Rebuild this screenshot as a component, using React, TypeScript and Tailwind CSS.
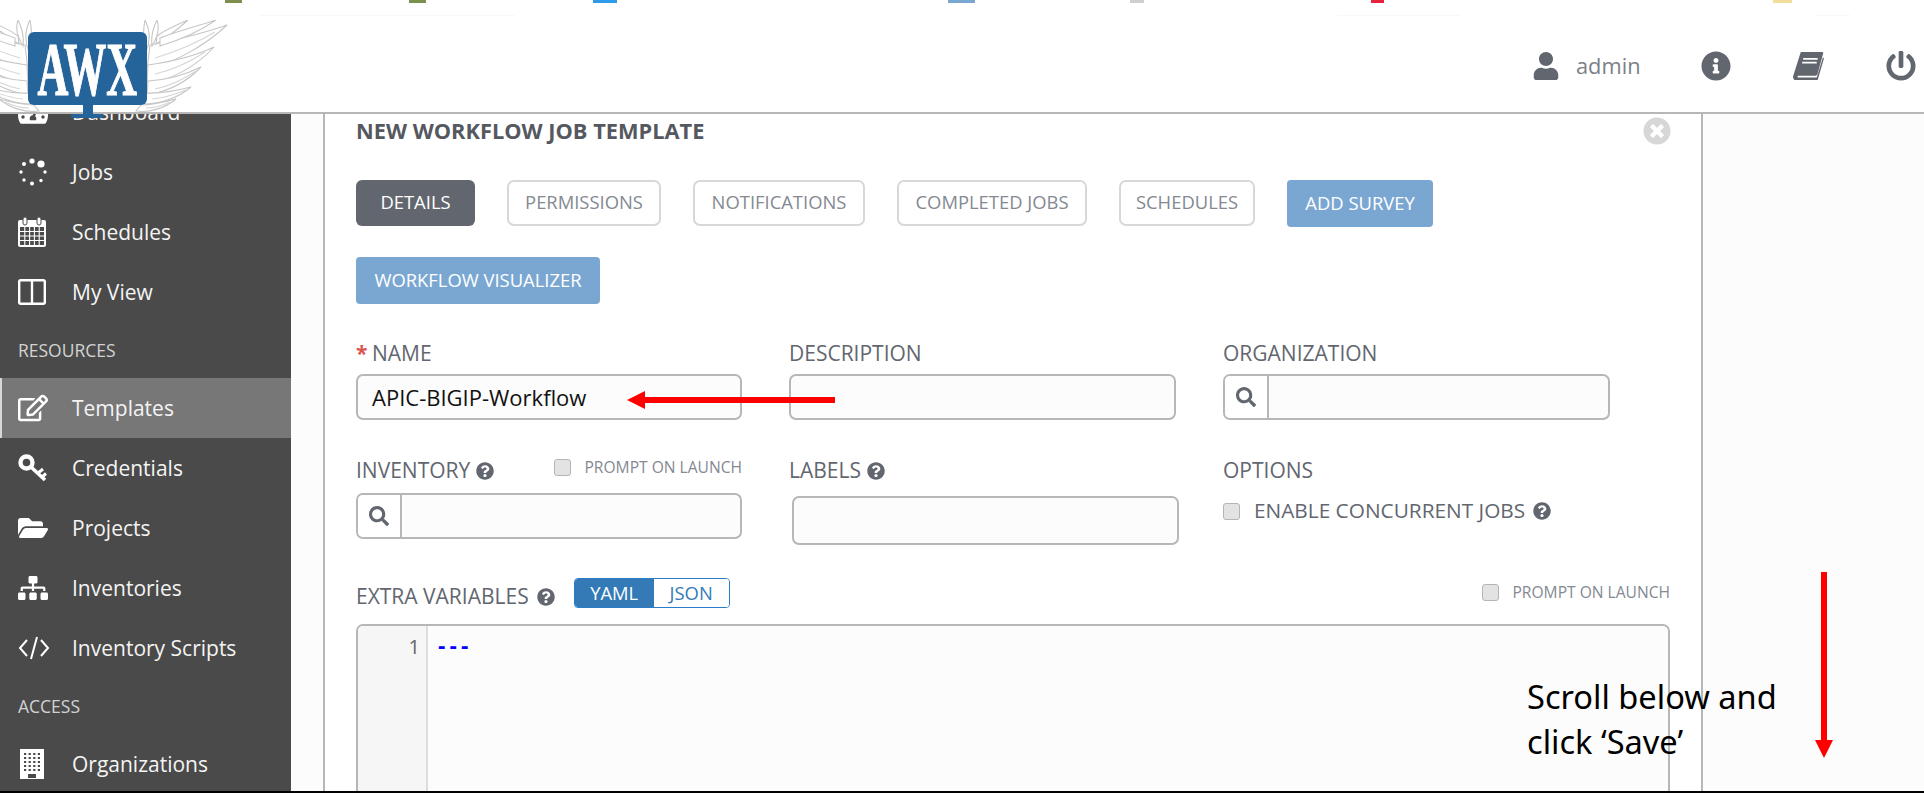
import {
  FaFolderOpen,
  FaInfoCircle,
  FaPowerOff,
  FaQuestionCircle,
  FaRegEdit,
  FaSearch,
  FaSitemap,
  FaTachometerAlt,
  FaTimesCircle,
  FaUser,
} from 'react-icons/fa'
import type { ReactNode } from 'react'

// bits of the page above that stick out at the top of the screenshot
const slivers = [
  'left-[225px] w-[17px] top-0 h-[3px] bg-[#7c8f4c]',
  'left-[409px] w-[17px] top-0 h-[3px] bg-[#7c8f4c]',
  'left-[593px] w-[24px] top-0 h-[3px] bg-[#2f9be8]',
  'left-[948px] w-[27px] top-0 h-[3px] bg-[#7aa7d2]',
  'left-[1130px] w-[14px] top-0 h-[3px] bg-[#cfcfcf]',
  'left-[1371px] w-[13px] top-0 h-[3px] bg-[#e8213f]',
  'left-[1773px] w-[19px] top-0 h-[3px] bg-[#f3dd9a]',
  'left-[260px] w-[255px] top-[15px] h-[1px] bg-[#f8f8f8]',
  'left-[1337px] w-[123px] top-[15px] h-[1px] bg-[#f8f8f8]',
  'left-[1816px] w-[34px] top-[15px] h-[1px] bg-[#f8f8f8]',
]

const feathers = [
  'M147 70C175 62 205 46 227 25C210 31 180 39 150 45Z',
  'M147 84C170 80 195 68 214 47C195 56 170 62 148 65Z',
  'M147 95C165 92 185 84 201 67C185 75 165 80 148 81Z',
  'M145 104C160 104 178 98 191 87C175 91 160 94 146 93Z',
  'M136 111C150 113 165 108 176 99C165 102 150 105 141 105Z',
  'M146 52C151 40 150 30 145 20C143 30 143 42 146 52Z',
  'M152 46C158 36 160 28 157 20C153 28 151 38 152 46Z',
  'M156 44C168 37 178 29 188 20C176 25 165 30 157 36Z',
  'M160 46C180 40 200 31 216 20C198 26 178 31 160 38Z',
]

const barbs = [
  'M155 58C175 52 195 44 215 32',
  'M155 74C172 70 190 62 205 52',
  'M155 89C170 86 184 79 196 71',
  'M152 99C164 98 176 94 186 90',
  'M146 108C154 108 162 106 170 102',
]

function JobsIcon() {
  return (
    <svg viewBox="0 0 30 30" className="w-[30px] h-[30px]" fill="#fff">
      <circle cx="23" cy="7" r="3.6" />
      <circle cx="14" cy="4" r="2.6" />
      <circle cx="6" cy="7" r="2" />
      <circle cx="3" cy="15" r="1.7" />
      <circle cx="6" cy="23" r="1.7" />
      <circle cx="14" cy="26.5" r="2" />
      <circle cx="23" cy="23.5" r="1.7" />
      <circle cx="27" cy="15" r="1.7" />
    </svg>
  )
}

function CalendarIcon() {
  return (
    <svg viewBox="0 0 28 30" className="w-[28px] h-[30px]">
      <rect x="0" y="3" width="28" height="27" rx="2" fill="#fff" />
      <rect x="2" y="10" width="24" height="18" fill="#4a4a4a" />
      <path d="M2 14.5h24M2 19h24M2 23.5h24M6.8 10v18M11.6 10v18M16.4 10v18M21.2 10v18" stroke="#fff" strokeWidth="1.1" />
      <rect x="5" y="0" width="4" height="8" rx="2" fill="#fff" stroke="#4a4a4a" />
      <rect x="19" y="0" width="4" height="8" rx="2" fill="#fff" stroke="#4a4a4a" />
    </svg>
  )
}

function ColumnsIcon() {
  return (
    <svg viewBox="0 0 28 26" className="w-[28px] h-[26px]" fill="none" stroke="#fff" strokeWidth="2.4">
      <rect x="1.2" y="1.2" width="25.6" height="23.6" rx="1.5" />
      <path d="M14 1v24" />
    </svg>
  )
}

function KeyIcon() {
  return (
    <svg viewBox="0 0 30 28" className="w-[30px] h-[28px]" fill="none" stroke="#fff">
      <circle cx="8.5" cy="8.5" r="6" strokeWidth="4.4" />
      <path d="M13 13L27 26" strokeWidth="3.6" />
      <path d="M20 19l5-4M24 23l4-3.5" strokeWidth="3" />
    </svg>
  )
}

function CodeIcon() {
  return (
    <svg viewBox="0 0 32 24" className="w-[32px] h-[24px]" fill="none" stroke="#fff" strokeWidth="2">
      <path d="M9 4L2 12l7 8M23 4l7 8-7 8M19 1l-6 22" />
    </svg>
  )
}

function BuildingIcon() {
  const cells = []
  for (let row = 0; row < 5; row++) {
    for (let col = 0; col < 4; col++) {
      cells.push(<rect key={`${row}-${col}`} x={4 + col * 4.6} y={4 + row * 4} width="2.2" height="2" fill="#4a4a4a" />)
    }
  }
  return (
    <svg viewBox="0 0 24 30" className="w-[24px] h-[30px] ml-[2px]">
      <rect width="24" height="30" fill="#fff" />
      {cells}
      <rect x="8" y="25" width="8" height="4" fill="#4a4a4a" />
    </svg>
  )
}

function BookIcon() {
  return (
    <svg viewBox="0 0 32 29" className="w-[31px] h-[28px]" fill="#62666f">
      <path d="M8 0h22a1.2 1.2 0 0 1 1.2 1.5l-6 21.5a2 2 0 0 1-2 1.5H5a2 2 0 0 0 0 2h19.5l6.5-21 1 1.2-6.5 22.2a1.5 1.5 0 0 1-1.5 1H4a4 4 0 0 1-4-4.5z" />
      <path d="M10.5 7h15M9.5 11h15" stroke="#fff" strokeWidth="1.8" />
    </svg>
  )
}

function NavRow({ icon, label, active }: { icon: ReactNode; label: string; active?: boolean }) {
  return (
    <div
      className={
        active
          ? 'h-[60px] flex items-center pl-[16px] bg-[#777777] border-l-2 border-[#d8d8d8]'
          : 'h-[60px] flex items-center pl-[18px]'
      }
    >
      <span className="w-[54px] flex items-center text-white text-[30px]">{icon}</span>
      <span className="mt-[2px] text-[21px] text-[#f4f4f4]">{label}</span>
    </div>
  )
}

function SectionLabel({ children }: { children: string }) {
  return <div className="h-[56px] flex items-center pl-[18px] text-[17.5px] text-[#d2d2d2]">{children}</div>
}

function Tab({ children, width, active }: { children: string; width: string; active?: boolean }) {
  return (
    <div
      className={
        active
          ? `h-[46px] ${width} pb-[2px] flex items-center justify-center rounded-[6px] bg-[#62666f] text-white text-[18.4px]`
          : `h-[46px] ${width} pb-[2px] flex items-center justify-center rounded-[7px] border-2 border-[#d8d8d8] text-[#848992] text-[18.4px]`
      }
    >
      {children}
    </div>
  )
}

function BlueButton({ children, width }: { children: string; width: string }) {
  return (
    <div className={`h-[47px] ${width} pb-[2px] flex items-center justify-center rounded-[4px] bg-[#7aa7d2] text-white text-[18.4px]`}>
      {children}
    </div>
  )
}

function Help() {
  return <FaQuestionCircle className="text-[#62666f] text-[18px] shrink-0" />
}

function Check() {
  return <span className="w-[17px] h-[17px] rounded-[3px] bg-[#e3e3e3] border border-[#b5b5b5] shrink-0" />
}

function SearchInput() {
  return (
    <div className="h-[46px] flex rounded-[7px] border-2 border-[#b7b7b7] bg-[#fcfcfc] overflow-hidden">
      <span className="w-[44px] bg-white border-r-2 border-[#b7b7b7] flex items-center justify-center">
        <FaSearch className="text-[#62666f] text-[20px]" />
      </span>
    </div>
  )
}

function Logo() {
  return (
    <div className="absolute left-0 top-[20px] w-[228px] h-[100px] z-20">
      <svg viewBox="0 20 228 93" className="absolute left-0 top-0 w-[228px] h-[93px]" fill="#fff" stroke="#c6c6c6" strokeWidth="1.1">
        <g>
          {feathers.map((d) => (
            <path key={d} d={d} />
          ))}
          {barbs.map((d) => (
            <path key={d} d={d} fill="none" stroke="#d6d6d6" />
          ))}
        </g>
        <g transform="translate(175 0) scale(-1 1)">
          {feathers.map((d) => (
            <path key={d} d={d} />
          ))}
          {barbs.map((d) => (
            <path key={d} d={d} fill="none" stroke="#d6d6d6" />
          ))}
        </g>
      </svg>
      <div className="absolute left-[28px] top-[12px] w-[119px] h-[73px] rounded-[6px] bg-[#25639b] flex items-center justify-center">
        <span className="font-['Liberation_Serif',serif] font-bold text-white text-[62px] leading-[48px] [-webkit-text-stroke:1px_white] [transform:scale(0.69,1.22)]">
          AWX
        </span>
      </div>
      <div className="absolute left-[83px] top-[85px] w-[10px] h-[9px] bg-[#25639b]" />
      <div className="absolute left-[71px] top-[94px] w-[32px] h-[4px] rounded-[2px] bg-[#25639b]" />
    </div>
  )
}

function Arrow({ vertical }: { vertical?: boolean }) {
  if (vertical) {
    return (
      <svg viewBox="0 0 18 186" className="absolute left-[1815px] top-[572px] w-[18px] h-[186px] z-30" fill="#ff0000">
        <rect x="6" y="0" width="6" height="169" />
        <polygon points="0,168 18,168 9,186" />
      </svg>
    )
  }
  return (
    <svg viewBox="0 0 208 18" className="absolute left-[627px] top-[391px] w-[208px] h-[18px] z-30" fill="#ff0000">
      <rect x="17" y="6" width="191" height="6" />
      <polygon points="18,0 18,18 0,9" />
    </svg>
  )
}

export default function App() {
  return (
    <div className="relative h-[793px] w-[1924px] overflow-hidden flex flex-col bg-white font-['Open_Sans',sans-serif]">
      <header className="relative h-[114px] shrink-0 border-b-2 border-[#b7b7b7] bg-white flex items-center justify-end pr-[8px]">
        {slivers.map((s) => (
          <span key={s} className={`absolute ${s}`} />
        ))}
        <div className="flex items-center mt-[20px] text-[#62666f]">
          <FaUser className="text-[28px] mr-[16px]" />
          <span className="text-[21.8px] text-[#7c8088] w-[125px]">admin</span>
          <FaInfoCircle className="text-[30px] mr-[62px]" />
          <BookIcon />
          <FaPowerOff className="text-[30px] ml-[62px]" />
        </div>
      </header>
      <Logo />

      <div className="flex-1 min-h-0 flex">
        <nav className="w-[291px] shrink-0 bg-[#4a4a4a] overflow-hidden">
          <div className="-mt-[32px]">
            <NavRow icon={<FaTachometerAlt />} label="Dashboard" />
            <NavRow icon={<JobsIcon />} label="Jobs" />
            <NavRow icon={<CalendarIcon />} label="Schedules" />
            <NavRow icon={<ColumnsIcon />} label="My View" />
            <SectionLabel>RESOURCES</SectionLabel>
            <NavRow icon={<FaRegEdit />} label="Templates" active />
            <NavRow icon={<KeyIcon />} label="Credentials" />
            <NavRow icon={<FaFolderOpen />} label="Projects" />
            <NavRow icon={<FaSitemap />} label="Inventories" />
            <NavRow icon={<CodeIcon />} label="Inventory Scripts" />
            <SectionLabel>ACCESS</SectionLabel>
            <NavRow icon={<BuildingIcon />} label="Organizations" />
          </div>
        </nav>

        <main className="flex-1 bg-[#fcfcfc] pl-[32px] overflow-hidden">
          <section className="relative w-[1380px] h-full bg-white border-x-2 border-[#b7b7b7] pl-[31px] pr-[31px] overflow-hidden">
            <div className="flex items-center justify-between h-[34px]">
              <h1 className="text-[21.8px] font-bold text-[#55585f] whitespace-nowrap">NEW WORKFLOW JOB TEMPLATE</h1>
              <FaTimesCircle className="text-[#d7d7d7] text-[28px] -mr-[1px]" />
            </div>

            <div className="flex gap-[32px] mt-[32px]">
              <Tab active width="w-[119px]">DETAILS</Tab>
              <Tab width="w-[154px]">PERMISSIONS</Tab>
              <Tab width="w-[172px]">NOTIFICATIONS</Tab>
              <Tab width="w-[190px]">COMPLETED JOBS</Tab>
              <Tab width="w-[136px]">SCHEDULES</Tab>
              <BlueButton width="w-[146px]">ADD SURVEY</BlueButton>
            </div>
            <div className="flex mt-[30px]">
              <BlueButton width="w-[244px]">WORKFLOW VISUALIZER</BlueButton>
            </div>

            <div className="grid grid-cols-[386px_387px_387px] gap-x-[47px] mt-[36px] text-[21px] text-[#62666f]">
              <div>
                <div className="h-[26px] pt-[2px] flex items-center">
                  <span className="w-[16px] text-[#d9534f] font-bold">*</span>NAME
                </div>
                <div className="mt-[8px] h-[46px] flex items-center px-[14px] rounded-[7px] border-2 border-[#b7b7b7] bg-[#fcfcfc] text-[22px] text-[#111]">
                  APIC-BIGIP-Workflow
                </div>
              </div>
              <div>
                <div className="h-[26px] pt-[2px] flex items-center">DESCRIPTION</div>
                <div className="mt-[8px] h-[46px] rounded-[7px] border-2 border-[#b7b7b7] bg-[#fcfcfc]" />
              </div>
              <div>
                <div className="h-[26px] pt-[2px] flex items-center">ORGANIZATION</div>
                <div className="mt-[8px]">
                  <SearchInput />
                </div>
              </div>

              <div className="mt-[37px]">
                <div className="h-[26px] pt-[2px] flex items-center">
                  <span>INVENTORY</span>
                  <span className="ml-[6px]">
                    <Help />
                  </span>
                  <span className="ml-auto flex items-center gap-[13px] -mt-[6px] text-[15.6px] text-[#848992]">
                    <Check />
                    PROMPT ON LAUNCH
                  </span>
                </div>
                <div className="mt-[10px]">
                  <SearchInput />
                </div>
              </div>
              <div className="mt-[37px]">
                <div className="h-[26px] pt-[2px] flex items-center gap-[6px]">
                  LABELS
                  <Help />
                </div>
                <div className="mt-[13px] ml-[3px] -mr-[3px] h-[49px] rounded-[7px] border-2 border-[#b7b7b7] bg-[#fcfcfc]" />
              </div>
              <div className="mt-[37px]">
                <div className="h-[26px] pt-[2px] flex items-center">OPTIONS</div>
                <div className="mt-[12px] h-[32px] flex items-center text-[20.8px]">
                  <Check />
                  <span className="ml-[14px]">ENABLE CONCURRENT JOBS</span>
                  <span className="ml-[8px]">
                    <Help />
                  </span>
                </div>
              </div>
            </div>

            <div className="flex items-center mt-[33px] h-[30px] text-[21px] text-[#62666f]">
              <span className="mt-[7px]">EXTRA VARIABLES</span>
              <span className="ml-[8px] mt-[7px]">
                <Help />
              </span>
              <div className="ml-[19px] w-[156px] h-[30px] flex rounded-[4px] border border-[#2b7cc9] overflow-hidden text-[18.4px]">
                <span className="w-[79px] bg-[#337ab7] text-white flex items-center justify-center">YAML</span>
                <span className="flex-1 bg-white text-[#337ab7] flex items-center justify-center">JSON</span>
              </div>
              <span className="ml-auto flex items-center gap-[13px] text-[15.6px] text-[#848992]">
                <Check />
                PROMPT ON LAUNCH
              </span>
            </div>

            <div className="mt-[16px] h-[200px] flex rounded-t-[7px] border-2 border-[#b7b7b7] bg-[#fcfcfc] overflow-hidden">
              <div className="w-[70px] bg-[#f6f6f6] border-r-2 border-[#dddddd] pt-[6px] pr-[6px] text-right text-[20px] text-[#666]">
                1
              </div>
              <div className="pl-[8px] pt-[6px] text-[19px] text-[#0000ff] font-['DejaVu_Sans_Mono',monospace] font-bold">
                ---
              </div>
            </div>
          </section>
        </main>
      </div>

      <div className="h-[2px] shrink-0 bg-black" />

      <Arrow />
      <Arrow vertical />
      <p className="absolute left-[1527px] top-[674px] z-30 text-[32.6px] leading-[45px] text-black font-['Noto_Sans',sans-serif]">
        Scroll below and
        <br />
        click ‘Save’
      </p>
    </div>
  )
}
